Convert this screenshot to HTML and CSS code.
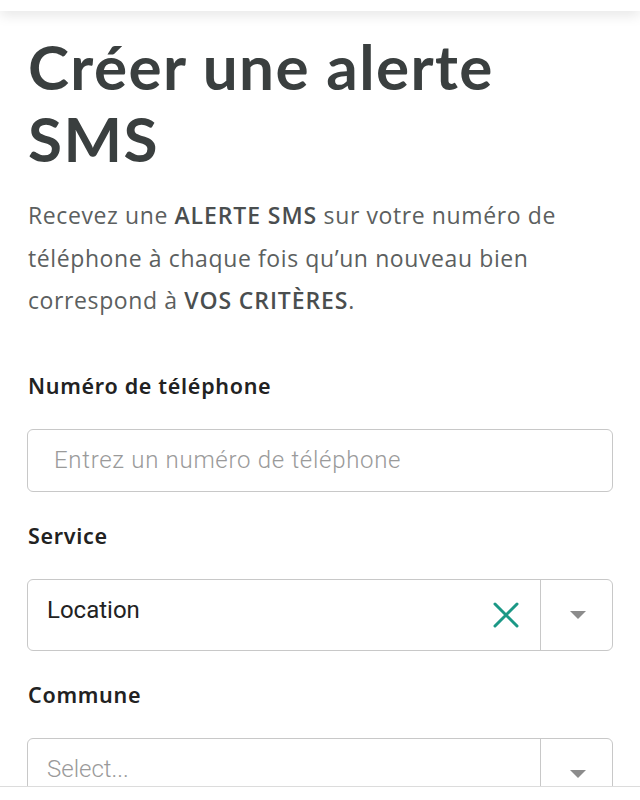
FILE: index.html
```html
<!DOCTYPE html>
<html lang="fr">
<head>
<meta charset="utf-8">
<title>Créer une alerte SMS</title>
<link rel="stylesheet" href="styles.css">
</head>
<body>
<header class="topbar"></header>
<main class="page">
  <h1 class="title">Créer une alerte SMS</h1>
  <p class="intro">Recevez une <strong>ALERTE SMS</strong> sur votre numéro de téléphone à chaque fois qu’un nouveau bien correspond à <strong>VOS CRITÈRES</strong>.</p>

  <form class="form">
    <div class="field">
      <label class="label" for="phone">Numéro de téléphone</label>
      <input class="input" id="phone" type="tel" placeholder="Entrez un numéro de téléphone">
    </div>

    <div class="field">
      <span class="label">Service</span>
      <div class="select">
        <div class="select-value">Location</div>
        <button type="button" class="select-clear" aria-label="Effacer">
          <svg width="26" height="26" viewBox="0 0 26 26"><path d="M2 2 L24 24 M24 2 L2 24" stroke="#1b9886" stroke-width="3" stroke-linecap="round" fill="none"/></svg>
        </button>
        <div class="select-toggle"><span class="caret"></span></div>
      </div>
    </div>

    <div class="field">
      <span class="label">Commune</span>
      <div class="select">
        <div class="select-value placeholder">Select...</div>
        <div class="select-toggle"><span class="caret"></span></div>
      </div>
    </div>
  </form>
</main>
<footer class="bottombar"></footer>
</body>
</html>
```

FILE: styles.css
```css
* { box-sizing: border-box; }

html, body {
  margin: 0;
  background: #fff;
}

body {
  font-family: "Lato", "Open Sans", sans-serif;
  color: #3a3f3f;
}

.topbar {
  height: 11px;
  background: #fff;
  box-shadow: 0 3px 14px rgba(0, 0, 0, 0.13);
  position: relative;
  z-index: 2;
}

.page {
  padding: 0 28px 60px 27px;
}

.title {
  margin: 19px 0 0 1px;
  font-family: "Lato", sans-serif;
  font-weight: 700;
  font-size: 62px;
  line-height: 72px;
  color: #3a3f3f;
  letter-spacing: 1.4px;
}

.intro {
  margin: 20px 0 0 1px;
  font-family: "Open Sans", sans-serif;
  font-size: 23px;
  letter-spacing: 0.6px;
  line-height: 42.5px;
  color: #5c5f60;
}

.intro strong {
  font-weight: 600;
  letter-spacing: 0.9px;
  color: #4a4e4f;
}

.form {
  margin-top: 50px;
  display: flex;
  flex-direction: column;
  gap: 30px;
}

.field {
  display: flex;
  flex-direction: column;
  gap: 29px;
}

.label {
  font-family: "Noto Sans", sans-serif;
  font-weight: 600;
  font-size: 21.5px;
  letter-spacing: 0.7px;
  line-height: 28px;
  color: #222;
  margin-left: 1px;
}

.input {
  height: 63px;
  width: 586px;
  border: 1.5px solid #c8c8c8;
  border-radius: 6px;
  padding: 0 26px;
  font-family: "Roboto", sans-serif;
  font-weight: 300;
  font-size: 24px;
  letter-spacing: 0.7px;
  color: #222;
  background: #fff;
  outline: none;
}

.input::placeholder {
  color: #9a9a9a;
}

.select {
  display: flex;
  align-items: stretch;
  width: 586px;
  height: 72px;
  border: 1.5px solid #c8c8c8;
  border-radius: 6px;
  background: #fff;
}

.select-value {
  flex: 1;
  padding: 0 0 10px 19px;
  display: flex;
  align-items: center;
  font-family: "Roboto", sans-serif;
  font-weight: 400;
  font-size: 24px;
  color: #222;
}

.select-value.placeholder {
  font-weight: 300;
  color: #9a9a9a;
}

.select-clear {
  border: 0;
  background: none;
  padding: 0 21px 0 0;
  display: flex;
  align-items: center;
  cursor: pointer;
}

.select-toggle {
  width: 72px;
  border-left: 1.5px solid #c8c8c8;
  display: flex;
  align-items: center;
  justify-content: center;
}

.caret {
  width: 0;
  height: 0;
  border-left: 8px solid transparent;
  border-right: 8px solid transparent;
  border-top: 8px solid #8c8c8c;
  margin-left: 2px;
}

.bottombar {
  position: fixed;
  left: 0;
  right: 0;
  bottom: 0;
  height: 14px;
  background: #fff;
  border-top: 1.5px solid #dcdcdc;
}
```
